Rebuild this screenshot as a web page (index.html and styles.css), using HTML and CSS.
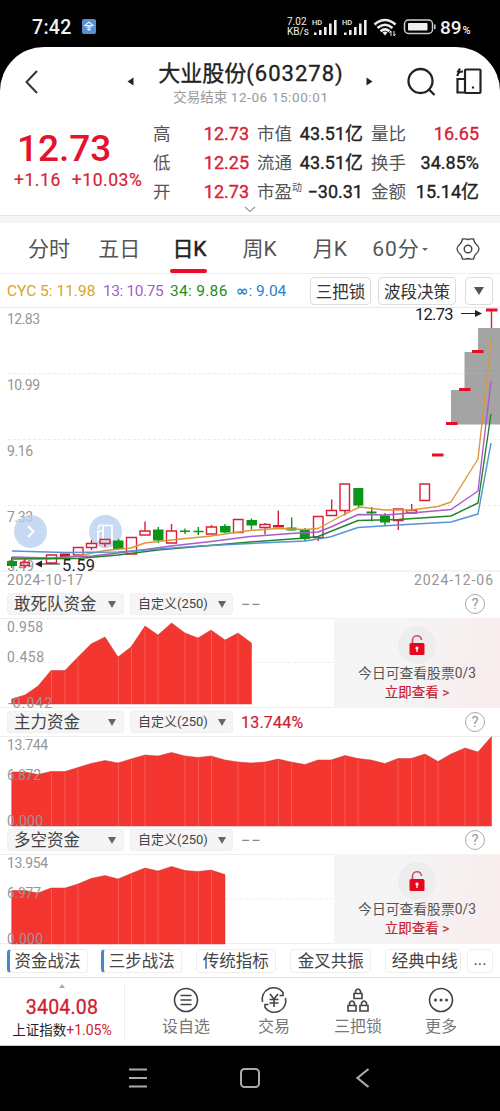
FILE: index.html
```html
<!DOCTYPE html>
<html lang="zh-CN">
<head>
<meta charset="utf-8">
<title>大业股份</title>
<link rel="stylesheet" href="styles.css">
</head>
<body>
<div class="phone">
  <div class="status">
    <span class="clock">7:42</span>
    <svg class="badge" width="14" height="15" viewBox="0 0 14 15"><rect width="14" height="15" rx="2" fill="#5b8fcf"/><path d="M7 3L3 6.500H11ZM4 8H10M5 10.500H9M7 6V12" stroke="#e4effb" stroke-width="1.200" fill="none"/></svg>
    <span class="speed"><span>7.02</span><span>KB/s</span></span>
    <svg class="radios" width="126" height="22" viewBox="311 16 126 22">
      <g fill="#eee">
        <path d="M314 32.500h2.600V35H314zM319 30h2.600v5H319zM324 27h2.600v8H324zM329 23.500h2.600V35H329zM334 20h2.600V35H334z"/>
        <path d="M344 32.500h2.600V35H344zM349 30h2.600v5H349zM354 27h2.600v8H354zM359 23.500h2.600V35H359zM364 20h2.600V35H364z"/>
        <text x="312" y="24.500" class="hd">HD</text><text x="342" y="24.500" class="hd">HD</text>
      </g>
      <g fill="none" stroke="#eee" stroke-width="2.600">
        <path d="M374.500 24.500Q385 15.500 395.500 24.500M377.500 28Q385 21.500 392.500 28M380.500 31.300Q385 27.500 389.500 31.300"/>
      </g>
      <path d="M382.500 32.500Q385 30.500 387.500 32.500L385 35.500Z" fill="#eee"/>
      <path d="M391 36v-5l-1.500 2M394 31v5l1.500-2" stroke="#eee" fill="none"/>
      <rect x="404.500" y="20" width="28" height="13.500" rx="4" fill="none" stroke="#ccc" stroke-width="1.500"/>
      <rect x="408" y="23" width="19.500" height="7.500" rx="1" fill="#eee"/>
      <path d="M434.800 24.500v4.500" stroke="#ccc" stroke-width="1.500"/>
    </svg>
    <span class="battery">89<small>%</small></span>
  </div>

  <main class="app">
    <header class="header">
      <svg class="back" width="20" height="30" viewBox="0 0 20 30"><path d="M16 4L5.500 15L16 26" fill="none" stroke="#333" stroke-width="2"/></svg>
      <div class="title">
        <svg width="7" height="9" viewBox="0 0 7 9"><path d="M6.500 .5v8L.5 4.500Z" fill="#222"/></svg>
        <div class="name"><h1>大业股份<span>(603278)</span></h1><p>交易结束 <span>12-06 15:00:01</span></p></div>
        <svg width="7" height="9" viewBox="0 0 7 9"><path d="M.5 .5v8L6.500 4.500Z" fill="#222"/></svg>
      </div>
      <div class="tools">
        <svg width="30" height="30" viewBox="407 67 30 30"><g fill="none" stroke="#222" stroke-width="2.300"><circle cx="421.500" cy="81" r="12"/><path d="M430 89.500L435.500 95"/></g></svg>
        <svg width="28" height="28" viewBox="456 68 28 28"><g fill="none" stroke="#222" stroke-width="2.200"><rect x="466" y="70.500" width="15.500" height="23.500" rx="1"/><path d="M466 80H458.500V93.500H466M458.500 77Q458.500 72.500 464 72.500M461 69.500L458.500 73.500M474 87.500v2"/></g></svg>
      </div>
    </header>

    <section class="quote">
      <div class="last"><strong>12.73</strong><div><span>+1.16</span><span>+10.03%</span></div></div>
      <dl class="stats">
        <dt>高</dt><dd class="up">12.73</dd><dt>市值</dt><dd>43.51亿</dd><dt>量比</dt><dd class="up">16.65</dd>
        <dt>低</dt><dd class="up">12.25</dd><dt>流通</dt><dd>43.51亿</dd><dt>换手</dt><dd>34.85%</dd>
        <dt>开</dt><dd class="up">12.73</dd><dt>市盈<sup>动</sup></dt><dd>−30.31</dd><dt>金额</dt><dd>15.14亿</dd>
      </dl>
      <svg class="expand" width="12" height="7" viewBox="0 0 12 7"><path d="M1 1L6 5.500L11 1" fill="none" stroke="#999" stroke-width="1.200"/></svg>
    </section>

    <nav class="tabs">
      <a>分时</a><a>五日</a><a class="active">日K</a><a>周K</a><a>月K</a><a>60分<i></i></a>
      <svg width="26" height="26" viewBox="-13 -13 26 26"><g fill="none" stroke="#444" stroke-width="1.400" stroke-linejoin="round"><path d="M-5.500 -10Q-2 -10.500 0 -9.500Q2 -10.500 5.500 -10Q6.500 -6 8 -5Q10.500 -3 11 0Q10.500 3 8 5Q6.500 6 5.500 10Q2 10.500 0 9.500Q-2 10.500 -5.500 10Q-6.500 6 -8 5Q-10.500 3 -11 0Q-10.500 -3 -8 -5Q-6.500 -6 -5.500 -10Z"/><circle r="3.800"/></g></svg>
    </nav>

    <div class="indicators">
      <span class="cyc5">CYC 5: 11.98</span><span class="cyc13">13: 10.75</span><span class="cyc34">34: 9.86</span><span class="cycinf"><b>∞</b>: 9.04</span>
      <button class="lock3">三把锁</button><button class="wave">波段决策</button><button class="more"><i></i></button>
    </div>

    <svg class="kline" width="500" height="283" viewBox="0 307 500 283">
      <path d="M0 307.500H500M0 571H500" stroke="#e9e9e9"/>
      <path d="M8 373.500H500M8 439.500H500M8 505.500H500" stroke="#ececec" stroke-dasharray="3 2"/>
      <g class="axis">
        <text x="7" y="324" textLength="33">12.83</text><text x="7" y="390" textLength="33">10.99</text><text x="7" y="456" textLength="26">9.16</text><text x="7" y="522" textLength="26">7.33</text><text x="7" y="571" textLength="27">5.49</text>
        <text x="7" y="585" textLength="76">2024-10-17</text><text x="414" y="585" textLength="79">2024-12-06</text>
      </g>
      <path d="M451 390H464.500V352H478V328H500V424.500H451Z" fill="#a4a4a4"/>
      <path d="M465 373.500H500" stroke="#aeaeae" stroke-dasharray="3 2"/>
      <g fill="#b9cff0" fill-opacity=".8"><circle cx="30.500" cy="531.500" r="16.500"/><circle cx="105.500" cy="531.500" r="16.500"/></g>
      <path d="M28 526L33.500 531.500L28 537" fill="none" stroke="#fff" stroke-width="2"/>
      <path d="M103 525.500h9V540h-9zM103 531h-5v9h5M98 529q0-4 4-4" fill="none" stroke="#fff" stroke-width="1.700"/>
      <g fill="none" stroke="#d82136" stroke-width="1.400">
        <path d="M20.500 562.500h9v3h-9zM46.500 555h10v8h-10zM73.500 547.500h9.500v7.500h-9.500zM86.500 543.500h10v4h-10zM100 539.500h10v4h-10zM126.500 537.500h10v16.500h-10zM140 531h10v4h-10zM166.500 531h10v12h-10zM206.500 527h10v7h-10zM233.500 519.500h9.500v13h-9.500zM260 524.500h10v3h-10zM313.500 516.500h9.500v21h-9.500zM326.500 510.500h10v5h-10zM340 484h9.500v26.500H340zM393.500 509h9.500v11.500h-9.500zM406.500 510.500h10v2.500h-10zM420 484h9.500v16.500H420z"/>
        <path d="M25 559v3M25 566v2M91.500 540v3M91.500 548v2M105 544v3M145 521.500V531M171.500 524v7M211.500 525v2M265 523v1M265 528v6.500M278.300 510.500V527M318.300 538v3M331.700 499.500v11M345 511v4.500M398.300 521v9M411.700 504v6M491.500 310V328"/>
      </g>
      <path d="M60 553.500h10v3.500H60zM273 525h11v2.500h-11zM432 453.500h11.500v3H432zM446 422h11.500v3H446zM459 388h11.500v3H459zM472 350h11.500v3H472zM486 308.500h11.500v3H486z" fill="#e60d28"/>
      <g fill="#0b9617"><path d="M7 561h10v5H7zM113 540.500h10.500v8.500H113zM153 529.500h10.500v11H153zM220 526h10.500v6.500H220zM246.500 520h10.500v5.500h-10.500zM286.500 527.500h10v3h-10zM299.800 530h10v9h-10zM353.300 488h10v17.500h-10zM366.500 511.500h10v2h-10zM380 515.500h10v7h-10z"/></g>
      <path d="M11.700 557v11M118.500 539v11M158.300 527v16M180 531.300h10M185 528.500v5.500M193.500 531.500h10M198.300 527v8M225 524v9M251.500 518.500v11M291.700 517.500v13M305 528v13M358.500 488V507M371.700 507v14.500M385 513v12" stroke="#0b9617" stroke-width="1.400"/>
      <g fill="none" stroke-width="1.400" stroke-linejoin="round">
        <path stroke="#db9836" d="M12 558L50 558.500L78 556L105 550.500L131 548L145 543L171 540L211 536L250 530.500L278 528.500L305 529.500L318 528.500L345 514L360 507L385 510L411 510L438 506.500L451 502L478 459L491.500 337"/>
        <path stroke="#a95cc8" d="M12 557L50 558L92 556L131 551.500L171 546L211 541.500L250 536.500L291 533.500L318 532L331 527L358 514.500L385 515L411 513L451 509.500L478 491L491 381"/>
        <path stroke="#22852b" d="M12 559L78 558.500L118 555L158 550L250 542L305 538L318 536.500L358 520.500L398 519.500L451 516L478 503L491 414"/>
        <path stroke="#5793d3" d="M12 551L65 552.500L118 552L145 550L200 546L250 543.500L305 541L330 537L358 527.500L398 525L451 522L478 514L491 443"/>
      </g>
      <g stroke="#222" fill="#222"><path d="M461 313.500H478M37 564H60"/><path stroke="none" d="M475 310L482 313.500L475 317ZM42 560.500L35 564L42 567.500Z"/></g>
      <g class="mark"><text x="415" y="320" textLength="38.500">12.73</text><text x="62" y="571" textLength="33">5.59</text></g>
    </svg>

    <section class="fund">
      <div class="fund-head"><span class="pick">敢死队资金<i></i></span><span class="pick custom">自定义(250)<i></i></span><span class="value none">−−</span><b class="help">?</b></div>
      <div class="plot">
        <svg width="500" height="90" viewBox="0 618 500 90">
          <path d="M0 618.500H500M0 707.500H500" stroke="#eee"/><path d="M8 662.500H335" stroke="#eee" stroke-dasharray="3 2"/>
          <path class="area" d="M11.700 704V699L25 695L38 686L51 670.500H65L78 657L91 644L105 637L118 657L131 647L145 626L158 635L171.500 623L185 633L198 638L211 630L225 640L238 633L251.500 643V704Z"/>
          <path class="seams" d="M51.500 672V704M65 672V704M78 658V704M118.500 658V704M131.500 648V704M145 628V704M158 636V704M185 634V704M198 639V704M211.500 631V704M225 641V704M238 634V704"/>
          <g class="axis"><text x="7" y="632" textLength="36">0.958</text><text x="7" y="662" textLength="37">0.458</text><text x="8" y="708" textLength="44">-0.042</text></g>
        </svg>
        <div class="unlock">
          <svg width="38" height="38" viewBox="-19 -19 38 38"><circle r="19" fill="#ededee"/><path d="M-4.500 -2V-4.500A4.500 4.500 0 0 1 4.500 -5" fill="none" stroke="#d4485a" stroke-width="1.600"/><rect x="-7.500" y="-2" width="15" height="12" rx="1.500" fill="#e5091f"/><circle cy="3" r="1.600" fill="#fff"/><path d="M0 3v4" stroke="#fff" stroke-width="1.300"/></svg>
          <p>今日可查看股票0/3</p><a>立即查看 &gt;</a>
        </div>
      </div>
    </section>

    <section class="fund">
      <div class="fund-head"><span class="pick">主力资金<i></i></span><span class="pick custom">自定义(250)<i></i></span><span class="value">13.744%</span><b class="help">?</b></div>
      <div class="plot">
        <svg width="500" height="90" viewBox="0 736 500 90">
          <path d="M0 736.500H500" stroke="#eee"/>
          <path class="area" d="M11.700 826V772H25L38 774.500L51 771.500H65L78 767.500L91 763.500L105 760.500L118 763L131 759L145 755L158 756L171.500 752.500L185 756L198 757.500L211 756L225 760L238 762L251 763L265 762L278 759L291 762L305 764.500L318 760H331L345 755.500L358 758.500L371 760L385 763.500L398 758.500H411L425 754L438 761.500L451 754L465 748L478 752L491.500 736.500V826Z"/>
          <path class="seams" d="M51.500 773V826M65 773V826M78 769V826M118.500 764V826M131.500 760V826M145 756V826M185 757V826M198.500 759V826M211.500 757V826M238 763V826M265 763V826M278.500 760V826M291.500 763V826M331.500 761V826M345 757V826M358 760V826M398 760V826M411.500 760V826M425 756V826M438 763V826M465 749V826M478 753V826"/>
          <g class="axis"><text x="7" y="750" textLength="41">13.744</text><text x="7" y="780" textLength="34">6.872</text><text x="7" y="826" textLength="36">0.000</text></g>
        </svg>
      </div>
    </section>

    <section class="fund">
      <div class="fund-head"><span class="pick">多空资金<i></i></span><span class="pick custom">自定义(250)<i></i></span><span class="value none">−−</span><b class="help">?</b></div>
      <div class="plot">
        <svg width="500" height="90" viewBox="0 854 500 90">
          <path d="M0 854.500H500M0 943.500H500" stroke="#eee"/><path d="M225 899H335" stroke="#eee" stroke-dasharray="3 2"/>
          <path class="area" d="M11.700 944V890.500H25L38 893L51 888H65L78 884L91 878.500L105 875.500L118 879L131 873.500L145 868L158 871L171.500 866.500L185 870.500L198 871.500L211 870L225 874.500V944Z"/>
          <path class="seams" d="M51.500 889V944M65 889V944M78 885V944M118.500 880V944M131.500 875V944M145 869V944M158 872V944M185 872V944M198.500 873V944M211.500 871V944"/>
          <g class="axis"><text x="7" y="868" textLength="41">13.954</text><text x="7" y="898" textLength="34">6.977</text><text x="7" y="944" textLength="36">0.000</text></g>
        </svg>
        <div class="unlock">
          <svg width="38" height="38" viewBox="-19 -19 38 38"><circle r="19" fill="#ededee"/><path d="M-4.500 -2V-4.500A4.500 4.500 0 0 1 4.500 -5" fill="none" stroke="#d4485a" stroke-width="1.600"/><rect x="-7.500" y="-2" width="15" height="12" rx="1.500" fill="#e5091f"/><circle cy="3" r="1.600" fill="#fff"/><path d="M0 3v4" stroke="#fff" stroke-width="1.300"/></svg>
          <p>今日可查看股票0/3</p><a>立即查看 &gt;</a>
        </div>
      </div>
    </section>

    <div class="chips">
      <span class="marked">资金战法</span><span class="marked">三步战法</span><span>传统指标</span><span>金叉共振</span><span class="last-chip">经典中线</span><span class="dots">...</span>
    </div>

    <footer class="bottom">
      <div class="index"><i></i><strong>3404.08</strong><p>上证指数<em>+1.05%</em></p></div>
      <div class="action a1"><svg width="28" height="28" viewBox="-14 -14 28 28"><g fill="none" stroke="#444" stroke-width="1.600"><circle r="11.500"/><path d="M-5.500 -4.500H5.500M-5.500 0H5.500M-5.500 4.500H5.500"/></g></svg>设自选</div>
      <div class="action a2"><svg width="28" height="28" viewBox="-14 -14 28 28"><g fill="none" stroke="#444" stroke-width="1.600"><path d="M-11.500 2A11.500 11.500 0 0 1 9 -7.500V-4.500H5.500M11.500 -2A11.500 11.500 0 0 1 -9 7.500V4.500H-5.500M-4 -6L0 -1L4 -6M0 -1V7M-4.500 -.5H4.500M-4.500 3H4.500"/></g></svg>交易</div>
      <div class="action a3"><svg width="28" height="28" viewBox="-14 -14 28 28"><g fill="none" stroke="#444" stroke-width="1.600"><path d="M-4 -6.500H4V-1.500H-4ZM-2.500 -6.500V-9Q0 -13 2.500 -9V-6.500M-10 5.500H-2V11H-10ZM-8.500 5.500V3Q-6 -1 -3.500 3V5.500M2 5.500H10V11H2ZM3.500 5.500V3Q6 -1 8.500 3V5.500"/></g></svg>三把锁</div>
      <div class="action a4"><svg width="28" height="28" viewBox="-14 -14 28 28"><circle r="11.500" fill="none" stroke="#444" stroke-width="1.600"/><g fill="#444"><circle cx="-5.500" r="1.500"/><circle r="1.500"/><circle cx="5.500" r="1.500"/></g></svg>更多</div>
    </footer>
  </main>

  <div class="system-nav">
    <svg width="22" height="24" viewBox="0 0 22 24"><path d="M2 3.500H20M2 12H20M2 20.500H20" stroke="#aaa" stroke-width="2.200"/></svg>
    <svg width="22" height="24" viewBox="0 0 22 24"><rect x="2" y="3" width="18" height="18" rx="3.500" fill="none" stroke="#aaa" stroke-width="2"/></svg>
    <svg width="22" height="24" viewBox="0 0 22 24"><path d="M16.500 3L5.500 12L16.500 21" fill="none" stroke="#aaa" stroke-width="2.200"/></svg>
  </div>
</div>
</body>
</html>
```
FILE: styles.css
```css
* { box-sizing: border-box; }
body { margin: 0; background: #000; color: #222; font-family: Roboto, "Noto Sans CJK SC", sans-serif; }
svg { display: block; flex: none; overflow: visible; }
h1, p, dl, dd { margin: 0; }
i, em { font-style: normal; }
.phone { width: 500px; height: 1111px; overflow: hidden; }

.status { height: 47px; display: flex; align-items: center; padding: 7px 0 0 32px; color: #f2f2f2; }
.clock { width: 50px; font-size: 19.5px; letter-spacing: .3px; font-weight: 500; }
.badge { margin-bottom: 1px; }
.speed { display: flex; flex-direction: column; width: 24px; margin-left: 191px; font-size: 10px; line-height: 10px; white-space: nowrap; }
.hd { font-size: 7.5px; font-weight: 500; }
.battery { margin-left: 3px; font-size: 19px; font-weight: 500; white-space: nowrap; }
.battery small { font-size: 11px; margin-left: 1px; }

.app { background: #fff; height: 999px; border-radius: 44px 44px 0 0; border-bottom: 1px solid #ccc; overflow: hidden; display: flex; flex-direction: column; }
.app > * { flex: none; }

.header { height: 63px; display: flex; align-items: center; padding: 6px 17px 0 21px; justify-content: space-between; }
.title { display: flex; align-items: center; justify-content: space-between; width: 246px; margin-left: 53px; }
.name { text-align: center; margin: 4px 0 0 2px; }
.name h1 { font-size: 22px; line-height: 27px; font-weight: 400; -webkit-text-stroke: .35px; white-space: nowrap; }
.name h1 span { letter-spacing: 1px; }
.name p { font-size: 13.5px; line-height: 21px; color: #999; white-space: nowrap; }
.name p span { letter-spacing: .6px; }
.tools { display: flex; gap: 19px; }

.quote { height: 106px; border-bottom: 1px solid #e5e5e5; position: relative; display: flex; padding: 10px 21px 0 14px; }
.last { width: 139px; color: #d72335; }
.last strong { display: block; margin: 7px 0 0 3px; font-size: 37px; line-height: 44px; font-weight: 500; color: #e4122b; }
.last div { display: flex; gap: 11px; padding-top: 1px; font-size: 17.5px; line-height: 17px; white-space: nowrap; }
.last span { letter-spacing: .55px; -webkit-text-stroke: .2px; }
.stats { display: grid; grid-template-columns: 30px 66px 50px 64px 45px 71px; grid-auto-rows: 29px; line-height: 27px; white-space: nowrap; width: 326px; }
.stats dt { font-size: 17.5px; line-height: 29px; color: #555; }
.stats dt:nth-of-type(3n+2), .stats dt:nth-of-type(3n) { padding-left: 8px; }
.stats dd { display: flex; justify-content: flex-end; font-size: 18px; -webkit-text-stroke: .35px; }
.stats .up { color: #d72335; }
.stats sup { font-size: 10px; line-height: 0; vertical-align: 7px; }
.expand { position: absolute; left: 244px; top: 96px; }

.tabs { height: 58px; border-top: 7px solid #f4f4f5; border-bottom: 1px solid #eee; display: flex; align-items: stretch; color: #555; font-size: 21px; line-height: 53px; padding-left: 14px; }
.tabs a { width: 70.2px; text-align: center; white-space: nowrap; }
.tabs a i { display: inline-block; border: 3.5px solid transparent; border-top-color: #666; border-bottom: 0; margin: 0 0 5px 2px; }
.tabs .active { color: #222; -webkit-text-stroke: .5px; position: relative; }
.tabs .active::after { content: ""; position: absolute; left: 16px; bottom: 0; width: 37px; height: 4px; border-radius: 2px; background: #ee0b27; }
.tabs a:nth-child(n+6) { width: 74px; margin-left: -2px; letter-spacing: .9px; }
.tabs svg { margin: 13px 0 0 18px; }

.indicators { height: 33px; display: flex; align-items: center; padding-left: 7px; font-size: 15.5px; white-space: nowrap; }
.cyc5 { color: #daa420; width: 96px; }
.cyc13 { color: #a95cc8; width: 67px; letter-spacing: -.4px; }
.cyc34 { color: #1c8e25; width: 66px; letter-spacing: .3px; }
.cycinf { color: #2980d3; width: 74px; }
.cycinf b { font: 700 15px/1 "DejaVu Sans", sans-serif; }
.indicators button { height: 28px; padding: 0; background: #fff; border: 1px solid #ddd; border-radius: 4px; font: 16.5px/24px "Noto Sans CJK SC", sans-serif; color: #333; }
.indicators .lock3 { width: 61px; }
.indicators .wave { width: 78px; margin-left: 7px; }
.indicators .more { width: 28px; margin-left: 9px; display: grid; place-items: center; }
.more i { border: 5px solid transparent; border-top: 8px solid #555; border-bottom: 0; }

.axis { fill: #969696; font-size: 14px; }
.mark { fill: #222; font-size: 16.5px; }
.fund-head { height: 28px; display: flex; align-items: center; padding: 0 15px 0 7px; }
.pick { display: flex; justify-content: space-between; align-items: center; width: 117px; height: 22px; padding: 1px 7px 0 6px; border-radius: 3px; background: #f5f5f5; border: 1px solid #f0f0f0; color: #444; font-size: 16.5px; line-height: 20px; white-space: nowrap; }
.pick i { border: 4px solid transparent; border-top: 7px solid #666; border-bottom: 0; }
.custom { width: 103px; margin-left: 6px; font-size: 13px; padding: 0 6px 0 7px; }
.value { margin-left: 8px; font-size: 16px; letter-spacing: .2px; -webkit-text-stroke: .2px; color: #c92333; }
.none { color: #888; letter-spacing: 1px; }
.help { margin-left: auto; width: 20px; height: 20px; border: 1.5px solid #aaa; border-radius: 50%; color: #999; font-weight: 400; font-size: 15px; line-height: 18px; text-align: center; }
.plot { position: relative; height: 90px; }
.area { fill: #f43630; stroke: #c53a35; stroke-width: .5; }
.seams { stroke: #f85b54; stroke-width: 1; }
.unlock { position: absolute; left: 334px; top: 0; width: 166px; height: 90px; background: linear-gradient(105deg, #f5f5f6 35%, #f8eded 90%); display: flex; flex-direction: column; align-items: center; padding-top: 8px; }
.unlock p { font-size: 13.8px; line-height: 19px; color: #555; white-space: nowrap; }
.unlock a { font-size: 13.5px; line-height: 19px; color: #c82131; -webkit-text-stroke: .2px; white-space: nowrap; }

.chips { height: 34px; display: flex; align-items: center; padding: 0 7px; border-bottom: 1px solid #e5e5e5; font-size: 16.5px; color: #444; white-space: nowrap; }
.chips span { width: 81px; height: 24px; line-height: 24px; text-align: center; border: 1px solid #eee; border-radius: 4px; margin-right: 14.2px; }
.chips .marked { border-left: 3px solid #4c83d1; margin-right: 13.5px; padding-right: 2px; }
.chips .last-chip { width: 76px; margin-right: 6px; padding-left: 3px; }
.chips .dots { width: 26px; margin: 0; line-height: 20px; }

.bottom { flex: 1; display: flex; color: #777; font-size: 16px; line-height: 24px; }
.index { width: 125px; height: 56px; margin-top: 6px; border-right: 1px solid #eee; text-align: center; display: flex; flex-direction: column; align-items: center; }
.index i { border: 3px solid transparent; border-top: 0; border-bottom: 4px solid #aaa; }
.index strong { color: #d0202f; font-size: 19.5px; line-height: 24px; font-weight: 400; -webkit-text-stroke: .3px; letter-spacing: .2px; margin-top: 8px; }
.index p { font-size: 13.5px; line-height: 20px; color: #222; white-space: nowrap; }
.index em { color: #ce2030; font-size: 14px; }
.action { display: flex; flex-direction: column; align-items: center; padding-top: 8px; line-height: 26px; }
.a1 { width: 122px; }
.a2 { width: 54px; }
.a3 { width: 114px; }
.a4 { width: 52px; }

.system-nav { height: 65px; display: flex; gap: 90.5px; justify-content: center; padding-top: 20px; }
```
